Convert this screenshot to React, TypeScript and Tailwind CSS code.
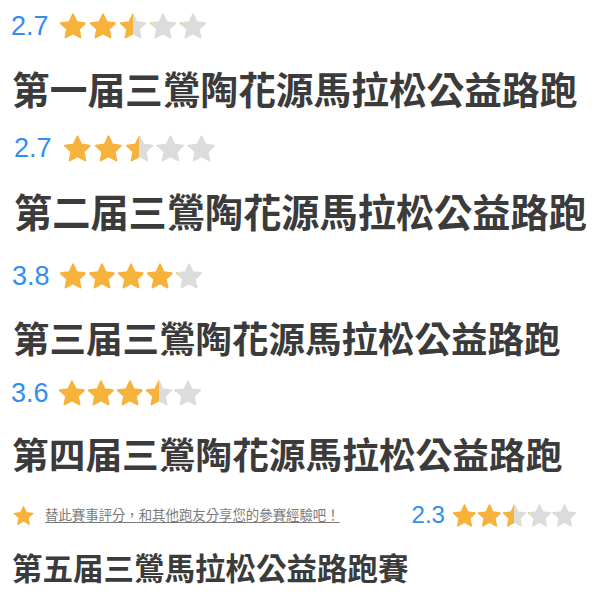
import React, { useId } from 'react';

const STAR_PATH =
  'M12 2 L15.12 8.71 L22.46 9.6 L17.04 14.64 L18.47 21.9 L12 18.3 L5.53 21.9 L6.96 14.64 L1.54 9.6 L8.88 8.71 Z';

type StarProps = { fill: number; size: number };

// fill: 1 = full, 0.5 = half, 0 = empty
const Star: React.FC<StarProps> = ({ fill, size }) => {
  const id = useId();
  const gold = '#f7b23b';
  const grey = '#dcdcdc';
  return (
    <svg width={size} height={size} viewBox="0 0 24 24" className="shrink-0">
      <defs>
        <linearGradient id={id} x1="0" x2="1" y1="0" y2="0">
          <stop offset={fill} stopColor={gold} />
          <stop offset={fill} stopColor={grey} />
        </linearGradient>
      </defs>
      <path d={STAR_PATH} fill={`url(#${id})`} stroke={`url(#${id})`} strokeWidth="1.6" strokeLinejoin="round" />
    </svg>
  );
};

const Stars: React.FC<{ score: number; size: number; gap: string }> = ({ score, size, gap }) => {
  const rounded = Math.round(score * 2) / 2;
  return (
    <div className={`flex items-center ${gap}`}>
      {[0, 1, 2, 3, 4].map((i) => (
        <Star key={i} size={size} fill={Math.max(0, Math.min(1, rounded - i))} />
      ))}
    </div>
  );
};

const Score: React.FC<{ value: string; className: string }> = ({ value, className }) => (
  <span className={`text-[#2f8ef0] ${className}`} style={{ fontFamily: '"Liberation Sans", Arial, sans-serif' }}>
    {value}
  </span>
);

const cjk = { fontFamily: '"Noto Sans CJK TC", "Noto Sans CJK SC", sans-serif' };

const App: React.FC = () => {
  return (
    <div className="w-[600px] h-[600px] bg-white overflow-hidden text-[#3b3b3b]" style={cjk}>
      {/* 1 */}
      <div className="h-[52px] flex items-center pl-[11px] gap-[10px]">
        <Score value="2.7" className="text-[27px]" />
        <Stars score={2.7} size={28} gap="gap-[2px]" />
      </div>
      <div className="h-[72px] flex items-center pl-[12px] text-[37.7px] font-bold leading-none">
        第一届三鶯陶花源馬拉松公益路跑
      </div>

      {/* 2 */}
      <div className="h-[48px] flex items-center pl-[14px] gap-[11px]">
        <Score value="2.7" className="text-[27px]" />
        <Stars score={2.7} size={29} gap="gap-[2px]" />
      </div>
      <div className="h-[78px] flex items-center pl-[14px] text-[38.2px] font-bold leading-none">
        第二届三鶯陶花源馬拉松公益路跑
      </div>

      {/* 3 */}
      <div className="h-[52px] flex items-center pl-[12px] gap-[9px]">
        <Score value="3.8" className="text-[27px]" />
        <Stars score={3.8} size={28} gap="gap-[1px]" />
      </div>
      <div className="h-[72px] flex items-center pl-[13px] text-[36.5px] font-bold leading-none">
        第三届三鶯陶花源馬拉松公益路跑
      </div>

      {/* 4 */}
      <div className="h-[38px] flex items-center pl-[11px] gap-[9px]">
        <Score value="3.6" className="text-[27px]" />
        <Stars score={3.6} size={28} gap="gap-[1px]" />
      </div>
      <div className="h-[82px] flex items-center pl-[12px] text-[36.7px] font-bold leading-none">
        第四届三鶯陶花源馬拉松公益路跑
      </div>

      {/* 5 */}
      <div className="h-[42px] flex items-center pl-[13px]">
        <svg width="21" height="21" viewBox="0 0 24 24" className="shrink-0">
          <path d={STAR_PATH} fill="#f7b23b" stroke="#f7b23b" strokeWidth="1.6" strokeLinejoin="round" />
        </svg>
        <a className="ml-[11px] text-[13.4px] text-[#7a7a7a] underline underline-offset-2 leading-none">
          替此賽事評分，和其他跑友分享您的參賽經驗吧！
        </a>
        <Score value="2.3" className="ml-[72px] text-[24px]" />
        <div className="ml-[7px]">
          <Stars score={2.3} size={25} gap="gap-[0px]" />
        </div>
      </div>
      <div className="h-[62px] flex items-center pl-[12px] text-[30.5px] font-bold leading-none">
        第五届三鶯馬拉松公益路跑賽
      </div>
    </div>
  );
};

export default App;
